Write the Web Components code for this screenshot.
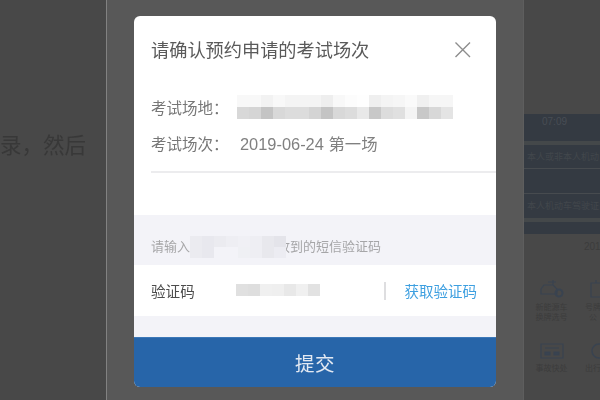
<!DOCTYPE html>
<html lang="zh">
<head>
<meta charset="utf-8">
<style>
  html, body { margin: 0; height: 100%; overflow: hidden; background: #565656; }
  body { font-family: "Liberation Sans", "Noto Sans CJK SC", sans-serif; }
</style>
</head>
<body>
<exam-page>
  <left-pane slot="left"></left-pane>
  <confirm-dialog slot="center"></confirm-dialog>
  <right-pane slot="right"></right-pane>
</exam-page>

<script>
class ExamPage extends HTMLElement {
  constructor() {
    super();
    this.attachShadow({ mode: "open" }).innerHTML = `
      <style>
        :host { display: flex; width: 600px; height: 400px; overflow: hidden; }
        .left { flex: 0 0 106px; }
        .center { flex: 0 0 418px; display: flex; justify-content: center; align-items: flex-start;
          padding-top: 16px; box-sizing: border-box; background: #585858;
          border-left: 1px solid #828282; border-right: 1px solid #5e5e5e; }
        .right { flex: 1; min-width: 0; }
      </style>
      <div class="left"><slot name="left"></slot></div>
      <div class="center"><slot name="center"></slot></div>
      <div class="right"><slot name="right"></slot></div>`;
  }
}

class LeftPane extends HTMLElement {
  constructor() {
    super();
    this.attachShadow({ mode: "open" }).innerHTML = `
      <style>
        :host { display: block; height: 400px; background: #484848; overflow: hidden; }
        p { margin: 0; padding-top: 132px; font-size: 21.5px; line-height: 28px; color: #383838;
            white-space: nowrap; direction: rtl; width: 86px; filter: blur(.4px); }
      </style>
      <p>录，然后</p>`;
  }
}

class MosaicStrip extends HTMLElement {
  connectedCallback() {
    const size = this.getAttribute("size") || "12";
    const cells = (this.getAttribute("cells") || "").split(" ");
    const root = this.shadowRoot || this.attachShadow({ mode: "open" });
    root.innerHTML = `
      <style>
        :host { display: flex; }
        i { display: block; width: ${size}px; height: 100%; flex: none; }
      </style>
      ${cells.map(c => `<i style="background:#${c}"></i>`).join("")}`;
  }
}

class FieldRow extends HTMLElement {
  constructor() {
    super();
    this.attachShadow({ mode: "open" }).innerHTML = `
      <style>
        :host { display: flex; align-items: center; font-size: 15.5px; color: #777; white-space: nowrap; }
        .k { flex: 0 0 89px; }
        .v { display: flex; flex: 1; color: #808080; font-size: 16.4px; }
      </style>
      <span class="k"><slot name="label"></slot></span>
      <span class="v"><slot></slot></span>`;
  }
}

class ConfirmDialog extends HTMLElement {
  constructor() {
    super();
    this.attachShadow({ mode: "open" }).innerHTML = `
      <style>
        :host { display: flex; flex-direction: column; width: 362px; height: 371px; background: #fff;
          border-radius: 6px; overflow: hidden; }
        header { display: flex; justify-content: space-between; align-items: center;
          height: 66px; padding: 0 24px 0 17px; flex: none; }
        h1 { margin: 0; font-size: 18.2px; font-weight: 400; color: #5a5a5a; filter: blur(.35px); }
        svg { display: block; margin-top: 1px; }
        .info { flex: none; height: 91px; margin-left: 17px; border-bottom: 2px solid #ececee;
          box-sizing: border-box; display: flex; flex-direction: column; padding-top: 12px; gap: 10px; }
        .info field-row { height: 26px; filter: blur(.35px); }
        .place { display: flex; flex-direction: column; margin-left: -3px; }
        .place mosaic-strip { height: 12px; }
        .gap { flex: none; height: 42px; }
        .sms { flex: none; background: #f3f3f8; height: 50px; box-sizing: border-box; padding: 24px 0 0 17px;
          font-size: 13px; line-height: 16px; color: #a6a6a8; display: flex; position: relative; }
        .sms span { filter: blur(.35px); }
        .sms .patch { position: absolute; left: 56px; top: 21px; display: flex; flex-direction: column; }
        .sms .patch mosaic-strip { height: 11px; }
        .sms .tail { margin-left: 87px; }
        .code { flex: none; height: 51px; display: flex; align-items: center; padding: 0 19px 0 17px; background: #fff; }
        .code .k { flex: 0 0 85px; font-size: 14.6px; color: #4c4c4c; filter: blur(.3px); }
        .code mosaic-strip { height: 12px; margin-top: -1px; filter: blur(.3px); }
        .code .bar { width: 1.5px; height: 18px; background: #dedee0; margin-left: auto; margin-right: 19px; }
        .code .get { font-size: 14.5px; color: #3d9fe0; filter: blur(.3px); }
        .fill { flex: 1; background: #f3f3f8; }
        button { flex: none; height: 50px; border: 0; background: #2765a9; color: #e3e9f2; padding: 0;
          font: inherit; font-size: 19.5px; letter-spacing: .5px; border-top: 1px solid #3c78b8; filter: blur(.3px); }
      </style>
      <header>
        <h1>请确认预约申请的考试场次</h1>
        <svg width="18" height="18" viewBox="0 0 18 18" fill="none" stroke="#8d8d8d" stroke-width="1.4">
          <path d="M1.5 1.5 16 16M16 1.5 1.5 16"/>
        </svg>
      </header>
      <section class="info">
        <field-row>
          <span slot="label">考试场地：</span>
          <div class="place">
            <mosaic-strip cells="f8f8f8 f8f8f8 f2f2f2 f8f8f8 f4f4f4 f4f4f4 f4f4f4 eeeeee f8f8f8 fcfcfc fefefe efefef f4f4f4 f6f6f6 fafafa f0f0f0 f6f6f6 f6f6f6"></mosaic-strip>
            <mosaic-strip cells="d8d8d8 d5d5d5 c4c4c4 d8d8d8 dcdcdc dcdcdc d4d4d4 c4c4c4 d8d8d8 dcdcdc e8e8e8 c8c8c8 dcdcdc e0e0e0 f4f4f4 c8c8c8 d8d8d8 e4e4e4"></mosaic-strip>
          </div>
        </field-row>
        <field-row>
          <span slot="label">考试场次：</span>
          2019-06-24 第一场
        </field-row>
      </section>
      <div class="gap"></div>
      <div class="sms">
        <span>请输入</span>
        <span class="tail">收到的短信验证码</span>
        <div class="patch">
          <mosaic-strip size="12" cells="ebebf0 e8e8ee ebebf0 eeeef3 f0f0f5 eeeef3 e8e8ed e4e4ea"></mosaic-strip>
          <mosaic-strip size="12" cells="ebebf0 e8e8ee f3f3f8 f3f3f8 eff0f4 eeeef3 e8e8ed ececf2"></mosaic-strip>
        </div>
      </div>
      <div class="code">
        <span class="k">验证码</span>
        <mosaic-strip cells="e0e0e0 dedede f0f0f0 efefef e8e8e8 f0f0f0 e2e2e2"></mosaic-strip>
        <span class="bar"></span>
        <span class="get">获取验证码</span>
      </div>
      <div class="fill"></div>
      <button>提交</button>`;
  }
}

class RightPane extends HTMLElement {
  constructor() {
    super();
    this.attachShadow({ mode: "open" }).innerHTML = `
      <style>
        :host { display: block; height: 400px; background: #484848; overflow: hidden; color: #3a3a3a; }
        .banner { margin-top: 114px; height: 120px; background: #343a42; display: flex; flex-direction: column;
          font-size: 9px; white-space: nowrap; overflow: hidden; color: #42474c; }
        .time { height: 27px; padding: 2px 0 0 18px; box-sizing: border-box; font-size: 10px; color: #484d54; }
        .rule { height: 4px; background: #44484a; flex: none; }
        .line { height: 24px; line-height: 24px; padding-left: 3px; box-sizing: border-box; border-bottom: 1px solid #474b4f; }
        .spacer { height: 25px; border-bottom: 1px solid #474b4f; box-sizing: border-box; }
        .year { font-size: 10px; color: #3c3c3c; padding: 7px 0 0 60px; height: 20px; box-sizing: border-box; white-space: nowrap; }
        .grid { display: grid; grid-template-columns: 61px 15px; padding-top: 26px; row-gap: 20px; overflow: hidden; }
        .cell { display: flex; flex-direction: column; align-items: center; font-size: 8px; line-height: 10px;
          color: #3c3c3c; text-align: center; white-space: nowrap; padding-left: 11px; width: 33px; }
        .cell svg { display: block; margin-bottom: 5px; flex: none; }
        .cell.edge { padding: 0; width: 15px; overflow: hidden; align-items: flex-start; }
        .cell.edge svg { margin-left: 5px; }
      </style>
      <div class="banner">
        <div class="time">07:09</div>
        <div class="rule"></div>
        <div class="line">本人或非本人机动</div>
        <div class="spacer"></div>
        <div class="line" style="border:0">本人机动车驾驶证</div>
        <div class="rule"></div>
      </div>
      <div class="year">201</div>
      <div class="grid">
        <div class="cell">
          <svg width="24" height="18" viewBox="0 0 24 18" fill="none" stroke="#394350" stroke-width="1.2">
            <path d="M1 9 4 5h9l4 4v5H1zM13 0v5M8 2h8"/><circle cx="19" cy="13" r="3.5" stroke-width="2"/>
          </svg>
          新能源车<br>换牌选号
        </div>
        <div class="cell edge">
          <svg width="10" height="18" viewBox="0 0 10 18" fill="none" stroke="#394350" stroke-width="1.2"><path d="M10 3H1v14h9M6 3V0"/></svg>
          号牌<br>公
        </div>
        <div class="cell">
          <svg width="24" height="16" viewBox="0 0 24 16" fill="none" stroke="#394350" stroke-width="1.2">
            <path d="M1 1h22v14H1z"/><path d="M5 9h5v3H5zM14 9h5v3h-5z" fill="#394350"/><path d="M5 5h14"/>
          </svg>
          事故快处
        </div>
        <div class="cell edge">
          <svg width="10" height="16" viewBox="0 0 10 16" fill="none" stroke="#394350" stroke-width="1.5"><circle cx="9" cy="8" r="7"/></svg>
          出行
        </div>
      </div>`;
  }
}

customElements.define("exam-page", ExamPage);
customElements.define("left-pane", LeftPane);
customElements.define("mosaic-strip", MosaicStrip);
customElements.define("field-row", FieldRow);
customElements.define("confirm-dialog", ConfirmDialog);
customElements.define("right-pane", RightPane);
</script>
</body>
</html>
